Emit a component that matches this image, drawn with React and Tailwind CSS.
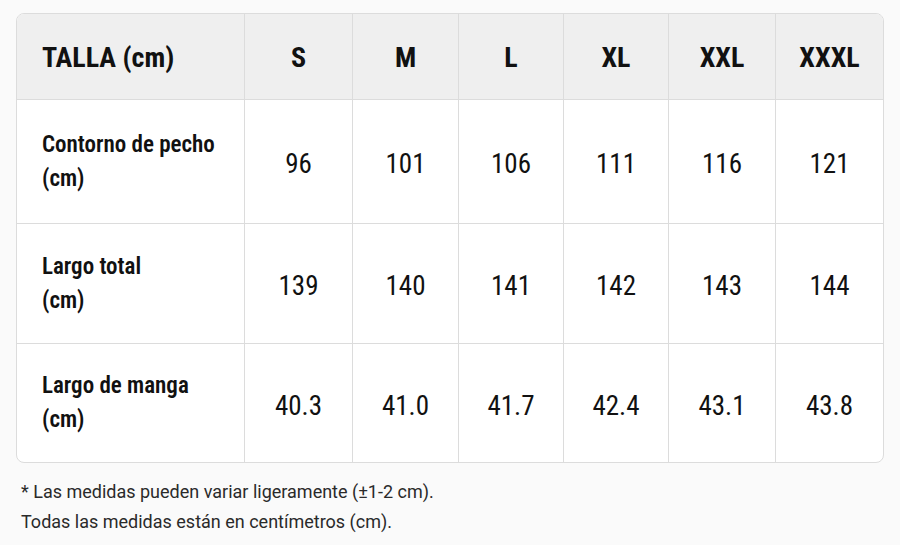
import React from "react";

const sizes = ["S", "M", "L", "XL", "XXL", "XXXL"];
const rows = [
  { label: ["Contorno de pecho", "(cm)"], values: ["96", "101", "106", "111", "116", "121"], h: "h-[124px]" },
  { label: ["Largo total", "(cm)"], values: ["139", "140", "141", "142", "143", "144"], h: "h-[120px]" },
  { label: ["Largo de manga", "(cm)"], values: ["40.3", "41.0", "41.7", "42.4", "43.1", "43.8"], h: "h-[118px]" },
];

export default function App() {
  return (
    <div className="w-[900px] h-[545px] bg-[#fafafa] pt-[13px] pl-[16px] font-['Roboto',sans-serif]">
      <div className="w-[868px] border border-[#dcdcdc] rounded-[8px] overflow-hidden bg-white font-stretch-condensed">
        <div className="grid grid-cols-[228px_108px_106px_105px_105px_107px_1fr] h-[86px] bg-[#efefef] border-b border-[#dcdcdc]">
          <div className="flex items-center pl-[25px] pt-[3px] text-[28px] font-bold text-[#111] border-r border-[#dcdcdc]">TALLA (cm)</div>
          {sizes.map((s, i) => (
            <div key={s} className={`flex items-center justify-center pt-[3px] text-[28px] font-bold text-[#111] ${i < 5 ? "border-r border-[#dcdcdc]" : ""}`}>{s}</div>
          ))}
        </div>
        {rows.map((r, ri) => (
          <div key={ri} className={`grid grid-cols-[228px_108px_106px_105px_105px_107px_1fr] ${r.h} ${ri < 2 ? "border-b border-[#dcdcdc]" : ""}`}>
            <div className="flex flex-col justify-center pl-[25px] text-[23px] font-semibold leading-[34px] text-[#111] border-r border-[#dcdcdc]">
              <span>{r.label[0]}</span>
              <span>{r.label[1]}</span>
            </div>
            {r.values.map((v, i) => (
              <div key={i} className={`flex items-center justify-center pt-[6px] text-[27px] text-[#111] ${i < 5 ? "border-r border-[#dcdcdc]" : ""}`}>{v}</div>
            ))}
          </div>
        ))}
      </div>
      <div className="mt-[14px] pl-[5px] text-[18px] leading-[30px] text-[#2a2a2a]">
        <p>* Las medidas pueden variar ligeramente (±1-2 cm).</p>
        <p>Todas las medidas están en centímetros (cm).</p>
      </div>
    </div>
  );
}
